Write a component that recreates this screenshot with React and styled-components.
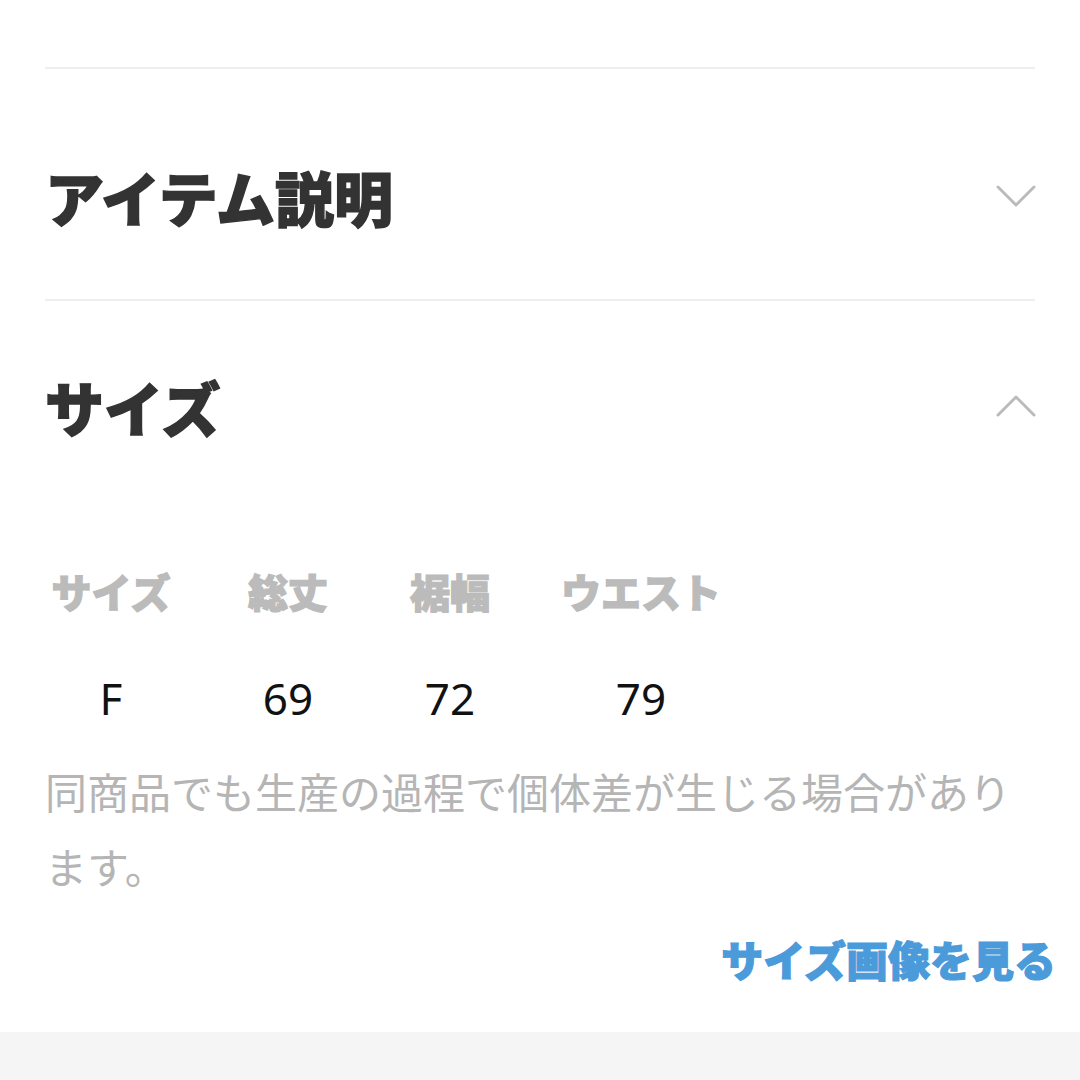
import React from "react";
import styled, { createGlobalStyle } from "styled-components";

const GlobalStyle = createGlobalStyle`
    html, body {
        margin: 0;
        padding: 0;
        background: #ffffff;
    }
    body {
        font-family: "Noto Sans CJK JP", "Noto Sans", sans-serif;
        -webkit-font-smoothing: antialiased;
    }
`;

const Page = styled.div`
    width: 1080px;
    min-height: 1080px;
    display: flex;
    flex-direction: column;
    background: #ffffff;
`;

const Content = styled.div`
    padding: 67px 45px 0;
`;

const Divider = styled.div`
    height: 2px;
    background: #eeeeee;
`;

const AccordionHeader = styled.div`
    display: flex;
    align-items: center;
    justify-content: space-between;
    padding: ${(p) => p.$pad};
`;

const Title = styled.h2`
    margin: 0;
    font-size: 59px;
    line-height: 60px;
    font-weight: 900;
    color: #333333;
    -webkit-text-stroke: 1.4px #333333;
`;

const Chevron = styled.svg`
    width: 40px;
    height: 26px;
    flex-shrink: 0;
    margin-right: -1px;
`;

const AccordionBody = styled.div`
    padding-top: 134px;
    display: flex;
    flex-direction: column;
`;

const SizeTable = styled.div`
    display: grid;
    grid-template-columns: 132px 222px 102px 280px;
    row-gap: 62px;
`;

const HeadCell = styled.div`
    text-align: center;
    font-size: 40px;
    line-height: 40px;
    font-weight: 900;
    color: #bbbbbb;
    -webkit-text-stroke: 1.2px #bbbbbb;
`;

const ValueCell = styled.div`
    text-align: center;
    font-family: "Noto Sans", "Noto Sans CJK JP", sans-serif;
    font-size: 44px;
    line-height: 50px;
    font-weight: 400;
    color: #111111;
`;

const Note = styled.p`
    margin: 30px 0 0;
    font-size: 42px;
    line-height: 75px;
    font-weight: 400;
    color: #b5b5b5;
`;

const SizeLink = styled.a`
    align-self: flex-end;
    margin: 31px -21px 0 0;
    font-size: 42px;
    line-height: 50px;
    font-weight: 900;
    color: #4b9bdb;
    -webkit-text-stroke: 1.2px #4b9bdb;
    text-decoration: none;
`;

const Footer = styled.div`
    margin-top: 48px;
    flex: 1;
    min-height: 48px;
    background: #f5f5f5;
`;

function ChevronIcon({ up }) {
    return (
        <Chevron viewBox="0 0 40 26" fill="none">
            <polyline
                points={up ? "2,21 20,3 38,21" : "2,3 20,21 38,3"}
                stroke="#bbbbbb"
                strokeWidth="3"
                strokeLinecap="round"
                strokeLinejoin="round"
            />
        </Chevron>
    );
}

const headers = ["サイズ", "総丈", "裾幅", "ウエスト"];
const values = ["F", "69", "72", "79"];

export default function App() {
    return (
        <Page>
            <GlobalStyle />
            <Content>
                <Divider />
                <AccordionHeader $pad="98px 0 72px">
                    <Title>アイテム説明</Title>
                    <ChevronIcon />
                </AccordionHeader>
                <Divider />
                <AccordionHeader $pad="76px 0 0">
                    <Title>サイズ</Title>
                    <ChevronIcon up />
                </AccordionHeader>
                <AccordionBody>
                    <SizeTable>
                        {headers.map((h) => (
                            <HeadCell key={h}>{h}</HeadCell>
                        ))}
                        {values.map((v, i) => (
                            <ValueCell key={i}>{v}</ValueCell>
                        ))}
                    </SizeTable>
                    <Note>同商品でも生産の過程で個体差が生じる場合があります。</Note>
                    <SizeLink href="#">サイズ画像を見る</SizeLink>
                </AccordionBody>
            </Content>
            <Footer />
        </Page>
    );
}
